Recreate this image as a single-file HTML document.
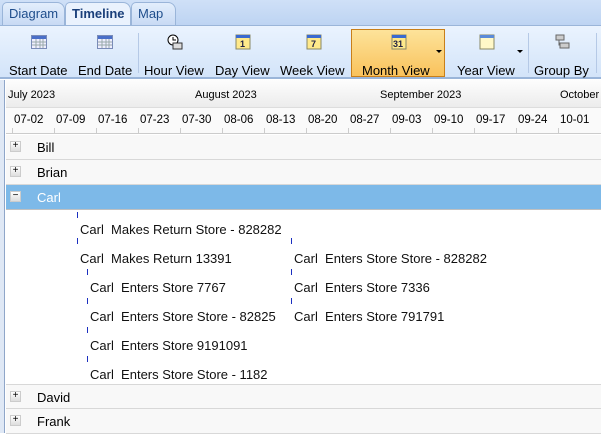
<!DOCTYPE html>
<html><head><style>
*{margin:0;padding:0;box-sizing:border-box}
body{width:601px;height:433px;overflow:hidden;font-family:"Liberation Sans",sans-serif;font-size:12px;background:#fff;position:relative}
.a{position:absolute;white-space:nowrap}
.tab{position:absolute;top:2px;height:23px;border:1px solid #9ab5d9;border-bottom:none;border-radius:5px 8px 0 0;background:linear-gradient(#e3eefc,#c8daf4);color:#1f4e8c;font-size:13px;padding:3px 6px 0}
.tb{position:absolute;top:63px;font-size:13px;color:#000}
.ic{position:absolute;top:34px;width:16px;height:16px}
.wk{position:absolute;top:114px;font-size:11.5px}
.vl{position:absolute;top:128px;width:1px;height:5px;background:#ccc}
.row{position:absolute;left:6px;width:595px;height:25px;border-bottom:1px solid #d8d8d8;background:#f8f8f8}
.row span{position:absolute;left:31px;top:5px;font-size:13px}
.pb{position:absolute;left:4px;top:6px;width:11px;height:11px;background:linear-gradient(#fff,#ddd);border:1px solid #ccc;font-size:10px;line-height:8px;text-align:center}
.ev{position:absolute;font-size:13px;color:#111}
.tk{position:absolute;width:1px;height:6px;background:#1a2fc0}
</style></head><body>
<div class="a" style="left:0;top:0;width:601px;height:27px;background:linear-gradient(#cfe0f7,#bcd3f2)"></div>
<div class="tab" style="left:2px;width:63px">Diagram</div>
<div class="tab" style="left:131px;width:45px">Map</div>
<div class="tab" style="left:65px;width:66px;background:#eaf2fd;color:#1a3f7a;font-weight:bold;height:25px">Timeline</div>
<div class="a" style="left:0;top:25px;width:601px;height:54px;background:linear-gradient(#eaf3fe,#d3e4f9);border-top:1px solid #9ab5d9;border-bottom:2px solid #9ab5d9"></div>
<div class="a" style="left:351px;top:29px;width:94px;height:48px;background:linear-gradient(#fde39a,#f9c25c);border:1px solid #c87f1a"></div>
<svg class="ic" style="left:31px"><rect x="0.5" y="1.5" width="15" height="13" fill="#eef" stroke="#7a8cb8"/><rect x="1" y="2" width="14" height="3" fill="#4a6fc8"/><path d="M1 8h14M1 11h14M5 5v9M9 5v9M12 5v9" stroke="#9aa"/></svg>
<svg class="ic" style="left:97px"><rect x="0.5" y="1.5" width="15" height="13" fill="#eef" stroke="#7a8cb8"/><rect x="1" y="2" width="14" height="3" fill="#4a6fc8"/><path d="M1 8h14M1 11h14M5 5v9M9 5v9M12 5v9" stroke="#9aa"/></svg>
<svg class="ic" style="left:167px"><circle cx="6" cy="6" r="5" fill="#fff" stroke="#000"/><path d="M6 3v3h3" stroke="#000" fill="none"/><rect x="6" y="9" width="9" height="6" fill="#ddd" stroke="#333"/></svg>
<svg class="ic" style="left:235px"><rect x="1" y="1" width="14" height="14" fill="#ffe98a" stroke="#886"/><rect x="1" y="1" width="14" height="3" fill="#3a6ad0"/><text x="5" y="13" font-size="9" font-weight="bold" fill="#224">1</text></svg>
<svg class="ic" style="left:306px"><rect x="1" y="1" width="14" height="14" fill="#ffe98a" stroke="#886"/><rect x="1" y="1" width="14" height="3" fill="#3a6ad0"/><text x="5" y="13" font-size="9" font-weight="bold" fill="#224">7</text></svg>
<svg class="ic" style="left:391px"><rect x="1" y="1" width="14" height="14" fill="#ffe98a" stroke="#886"/><rect x="1" y="1" width="14" height="3" fill="#3a6ad0"/><text x="2" y="13" font-size="9" font-weight="bold" fill="#224">31</text></svg>
<svg class="ic" style="left:479px"><rect x="1" y="1" width="14" height="14" fill="#fff8c8" stroke="#886"/><rect x="1" y="1" width="14" height="3" fill="#5a8ad8"/></svg>
<svg class="ic" style="left:554px"><rect x="2" y="1" width="8" height="5" fill="#ccc" stroke="#666"/><rect x="6" y="9" width="9" height="5" fill="#ccc" stroke="#666"/><path d="M5 6v5h1" stroke="#666" fill="none"/></svg>
<div class="a" style="left:138px;top:33px;width:1px;height:40px;background:#b5c9e6"></div>
<div class="a" style="left:528px;top:33px;width:1px;height:40px;background:#b5c9e6"></div>
<div class="a" style="left:596px;top:33px;width:1px;height:40px;background:#b5c9e6"></div>
<div class="a" style="left:436px;top:50px;border:3px solid transparent;border-top:3px solid #000"></div>
<div class="a" style="left:517px;top:50px;border:3px solid transparent;border-top:3px solid #000"></div>
<div class="tb" style="left:9px">Start Date</div>
<div class="tb" style="left:78px">End Date</div>
<div class="tb" style="left:144px">Hour View</div>
<div class="tb" style="left:215px">Day View</div>
<div class="tb" style="left:280px">Week View</div>
<div class="tb" style="left:362px">Month View</div>
<div class="tb" style="left:457px">Year View</div>
<div class="tb" style="left:534px">Group By</div>
<div class="a" style="left:0;top:80px;width:5px;height:353px;background:#dfe8f5;border-right:1px solid #8fa6c9"></div>
<div class="a" style="left:6px;top:80px;width:595px;height:28px;background:linear-gradient(#fdfdfd,#ececec);border-bottom:1px solid #ddd"></div>
<div class="a" style="left:6px;top:108px;width:595px;height:26px;background:#fafafa;border-bottom:1px solid #ccc"></div>
<div class="a" style="left:8px;top:89px;font-size:11px">July 2023</div>
<div class="a" style="left:195px;top:89px;font-size:11px">August 2023</div>
<div class="a" style="left:380px;top:89px;font-size:11px">September 2023</div>
<div class="a" style="left:560px;top:89px;font-size:11px">October</div>
<div class="wk" style="left:14px">07-02</div><div class="wk" style="left:56px">07-09</div><div class="wk" style="left:98px">07-16</div><div class="wk" style="left:140px">07-23</div><div class="wk" style="left:182px">07-30</div><div class="wk" style="left:224px">08-06</div><div class="wk" style="left:266px">08-13</div><div class="wk" style="left:308px">08-20</div><div class="wk" style="left:350px">08-27</div><div class="wk" style="left:392px">09-03</div><div class="wk" style="left:434px">09-10</div><div class="wk" style="left:476px">09-17</div><div class="wk" style="left:518px">09-24</div><div class="wk" style="left:560px">10-01</div>
<div class="vl" style="left:12px"></div><div class="vl" style="left:54px"></div><div class="vl" style="left:96px"></div><div class="vl" style="left:138px"></div><div class="vl" style="left:180px"></div><div class="vl" style="left:222px"></div><div class="vl" style="left:264px"></div><div class="vl" style="left:306px"></div><div class="vl" style="left:348px"></div><div class="vl" style="left:390px"></div><div class="vl" style="left:432px"></div><div class="vl" style="left:474px"></div><div class="vl" style="left:516px"></div><div class="vl" style="left:558px"></div>
<div class="row" style="top:135px"><div class="pb">+</div><span>Bill</span></div>
<div class="row" style="top:160px"><div class="pb">+</div><span>Brian</span></div>
<div class="row" style="top:185px;background:#7db9e8;border-bottom:1px solid #c0c0c0"><div class="pb">−</div><span style="color:#fff">Carl</span></div>
<div class="tk" style="left:77px;top:212px"></div><div class="tk" style="left:77px;top:238px"></div><div class="tk" style="left:291px;top:238px"></div>
<div class="tk" style="left:87px;top:269px"></div><div class="tk" style="left:291px;top:269px"></div>
<div class="tk" style="left:87px;top:298px"></div><div class="tk" style="left:291px;top:298px"></div>
<div class="tk" style="left:87px;top:327px"></div><div class="tk" style="left:87px;top:356px"></div>
<div class="ev" style="left:80px;top:222px">Carl&nbsp; Makes Return Store - 828282</div>
<div class="ev" style="left:80px;top:251px">Carl&nbsp; Makes Return 13391</div>
<div class="ev" style="left:294px;top:251px">Carl&nbsp; Enters Store Store - 828282</div>
<div class="ev" style="left:90px;top:280px">Carl&nbsp; Enters Store 7767</div>
<div class="ev" style="left:294px;top:280px">Carl&nbsp; Enters Store 7336</div>
<div class="ev" style="left:90px;top:309px">Carl&nbsp; Enters Store Store - 82825</div>
<div class="ev" style="left:294px;top:309px">Carl&nbsp; Enters Store 791791</div>
<div class="ev" style="left:90px;top:338px">Carl&nbsp; Enters Store 9191091</div>
<div class="ev" style="left:90px;top:367px">Carl&nbsp; Enters Store Store - 1182</div>
<div class="row" style="top:384px;border-top:1px solid #d8d8d8"><div class="pb">+</div><span>David</span></div>
<div class="row" style="top:409px"><div class="pb">+</div><span>Frank</span></div>
</body></html>
